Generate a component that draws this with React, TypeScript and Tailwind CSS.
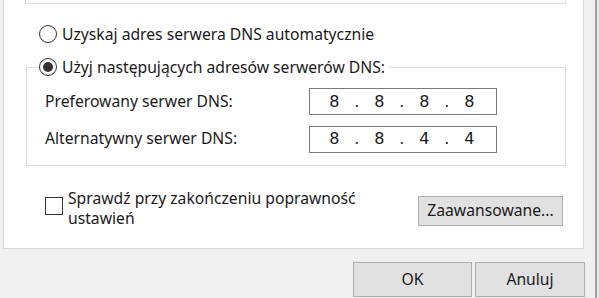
import React from "react";

const font = { fontFamily: '"Noto Sans", "Segoe UI", sans-serif' };

function Radio({ checked }: { checked?: boolean }) {
  return (
    <span className="flex h-[18px] w-[18px] shrink-0 items-center justify-center rounded-full border-[1.5px] border-[#333333] bg-white">
      {checked && <span className="h-[10px] w-[10px] rounded-full bg-[#333333]" />}
    </span>
  );
}

function IpBox({ parts }: { parts: string[] }) {
  const cells: string[] = [];
  parts.forEach((p, i) => {
    cells.push(p);
    if (i < parts.length - 1) cells.push(".");
  });
  return (
    <div className="flex h-[27px] w-[188px] items-center border-[1.5px] border-[#7a7a7a] bg-white pl-[13px] font-['DejaVu_Sans',sans-serif] text-[16px] text-[#1a1a1a]">
      {cells.map((c, i) => (
        <span key={i} className="w-[22.5px] text-center leading-none">
          {c}
        </span>
      ))}
    </div>
  );
}

export default function App() {
  return (
    <div
      className="flex h-[298px] w-[599px] overflow-hidden bg-[#f0f0f0] text-[15.7px] text-[#1a1a1a]"
      style={font}
    >
      <div className="flex w-[595px] flex-col">
        <div className="ml-[3px] flex h-[249px] w-[581px] flex-col border-x border-b border-[#d9d9d9] bg-white">
          <div className="ml-[21px] h-[4px] w-[541px] border-x border-b border-[#dcdcdc]" />
          <div className="ml-[35px] mt-[20px] flex h-[20px] items-center gap-[5px]">
            <Radio />
            <span className="leading-[20px]">Uzyskaj adres serwera DNS automatycznie</span>
          </div>
          <fieldset className="ml-[22px] mt-[13px] w-[540px] border border-[#dcdcdc] pb-[12px]">
            <legend className="ml-[11px] pl-[1px] pr-[4px]">
              <span className="flex h-[20px] items-center gap-[5px]">
                <Radio checked />
                <span className="leading-[20px]">Użyj następujących adresów serwerów DNS:</span>
              </span>
            </legend>
            <div className="mt-[11px] flex h-[27px] items-center pl-[18px]">
              <span className="w-[264px]">Preferowany serwer DNS:</span>
              <IpBox parts={["8", "8", "8", "8"]} />
            </div>
            <div className="mt-[10px] flex h-[28px] items-center pl-[18px]">
              <span className="w-[264px]">Alternatywny serwer DNS:</span>
              <IpBox parts={["8", "8", "4", "4"]} />
            </div>
          </fieldset>
          <div className="mt-[22px] flex items-start justify-between pl-[41px] pr-[20px]">
            <div className="flex items-start gap-[5px]">
              <span className="mt-[9px] h-[18px] w-[18px] shrink-0 border-[1.5px] border-[#333333] bg-white" />
              <div className="flex flex-col">
                <span className="leading-[20px]">Sprawdź przy zakończeniu poprawność</span>
                <span className="leading-[20px]">ustawień</span>
              </div>
            </div>
            <button className="mt-[8px] flex h-[30px] w-[145px] items-center justify-center border border-[#adadad] bg-[#e1e1e1]">
              Zaawansowane...
            </button>
          </div>
        </div>
        <div className="mt-[13px] flex justify-end gap-[3px] pr-[10px]">
          <button className="flex h-[35px] w-[119px] items-center justify-center border border-[#adadad] bg-[#e1e1e1]">
            OK
          </button>
          <button className="flex h-[35px] w-[110px] items-center justify-center border border-[#adadad] bg-[#e1e1e1]">
            Anuluj
          </button>
        </div>
      </div>
      <div className="w-[2px] bg-[#a0a0a0]" />
      <div className="w-[2px] bg-[#e8e8e8]" />
    </div>
  );
}
